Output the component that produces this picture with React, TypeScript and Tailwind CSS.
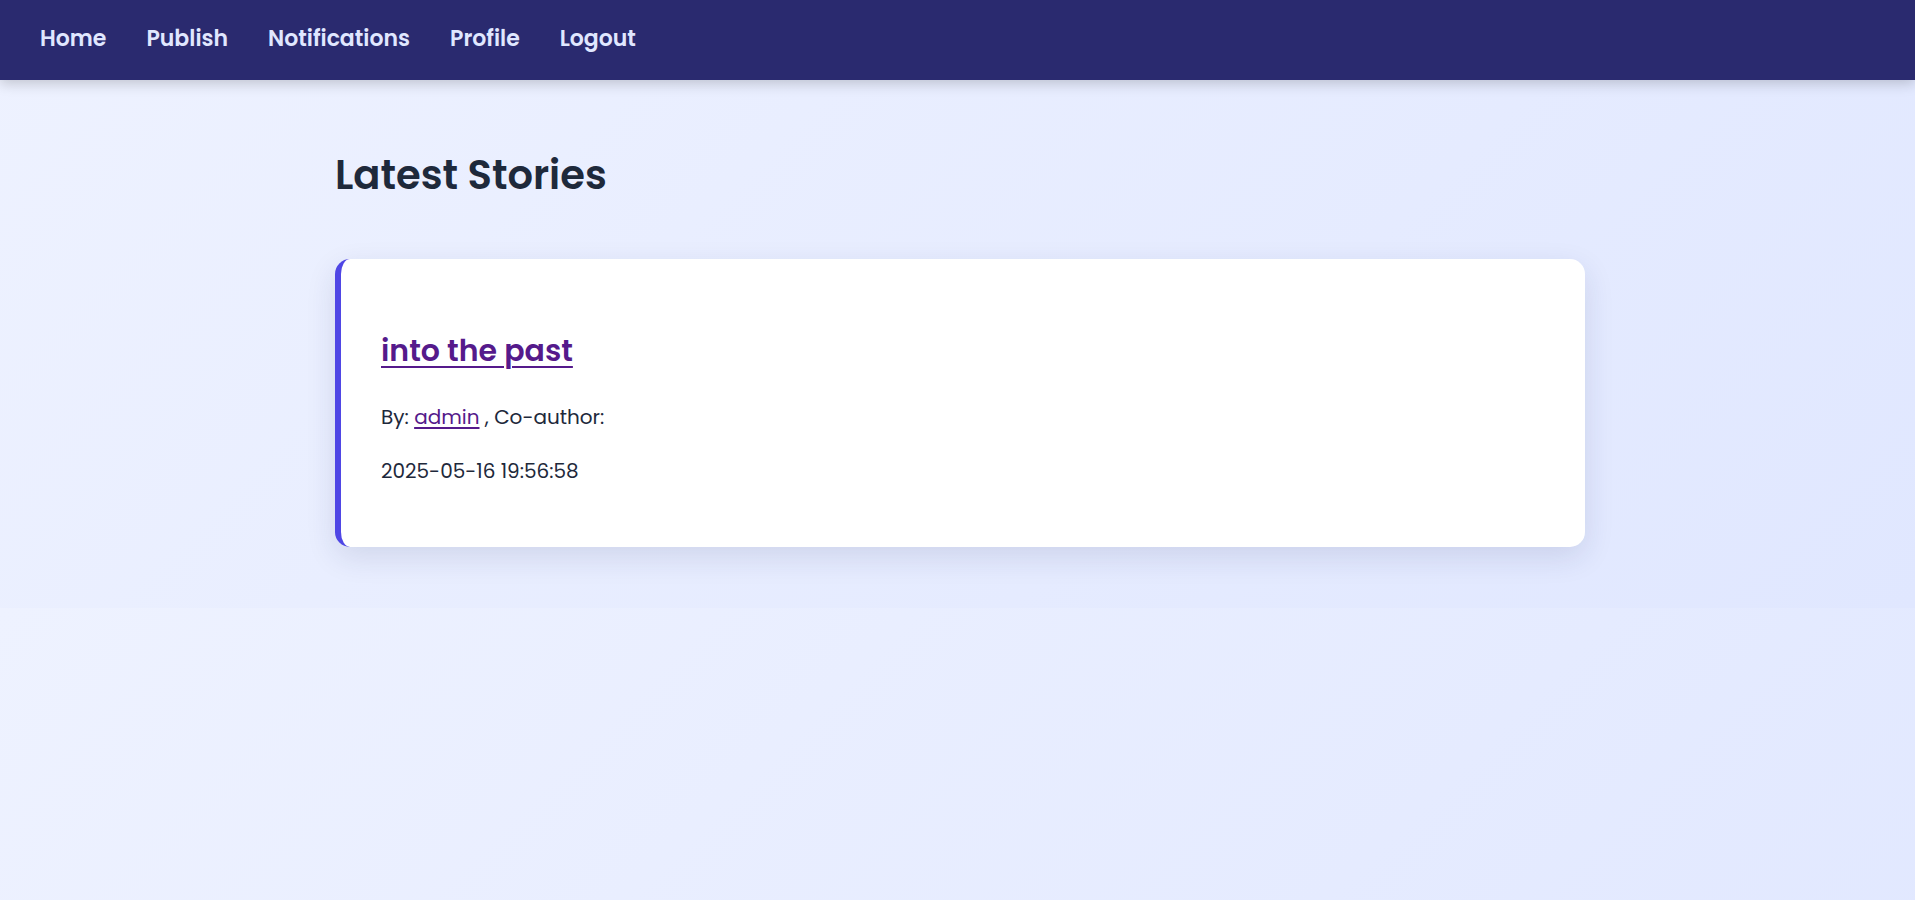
import React from "react";

const font = { fontFamily: '"Poppins", "Open Sans", "Noto Sans", sans-serif' };

export default function App() {
  const links = ["Home", "Publish", "Notifications", "Profile", "Logout"];
  return (
    <div
      className="min-h-[900px] w-full bg-[linear-gradient(135deg,#eef2ff_0%,#e0e7ff_100%)] bg-[length:100%_608px] bg-repeat-y"
      style={font}
    >
      <nav className="relative z-10 flex h-20 items-center gap-[40px] bg-[#2a2a6f] pl-[40px] pb-[3px] shadow-[0_4px_12px_rgba(0,0,0,0.18)]">
        {links.map((l) => (
          <a
            key={l}
            href="#"
            className="text-[22px] font-semibold leading-none text-[#e0e7ff] no-underline"
          >
            {l}
          </a>
        ))}
      </nav>
      <main className="mx-auto w-[1255px] pl-[5px] pt-[71px] pb-[61px]">
        <h1 className="mb-[60px] text-[40px] font-semibold leading-[48px] text-[#1e293b]">
          Latest Stories
        </h1>
        <div className="rounded-[15px] border-l-[6px] border-[#4f46e5] bg-white pl-[40px] pt-[74px] pb-[61px] shadow-[0_10px_30px_rgba(30,41,90,0.12)]">
          <h2 className="text-[30px] font-semibold leading-[36px]">
            <a href="#" className="text-[#551a8b] underline decoration-2 underline-offset-[5px]">
              into the past
            </a>
          </h2>
          <p className="mt-[33px] text-[20px] leading-[30px] text-[#1e293b]">
            By:{" "}
            <a href="#" className="text-[#551a8b] underline underline-offset-[3px]">
              admin
            </a>{" "}
            , Co-author:
          </p>
          <p className="mt-[24px] text-[20px] leading-[30px] text-[#1e293b]">
            2025-05-16 19:56:58
          </p>
        </div>
      </main>
    </div>
  );
}
